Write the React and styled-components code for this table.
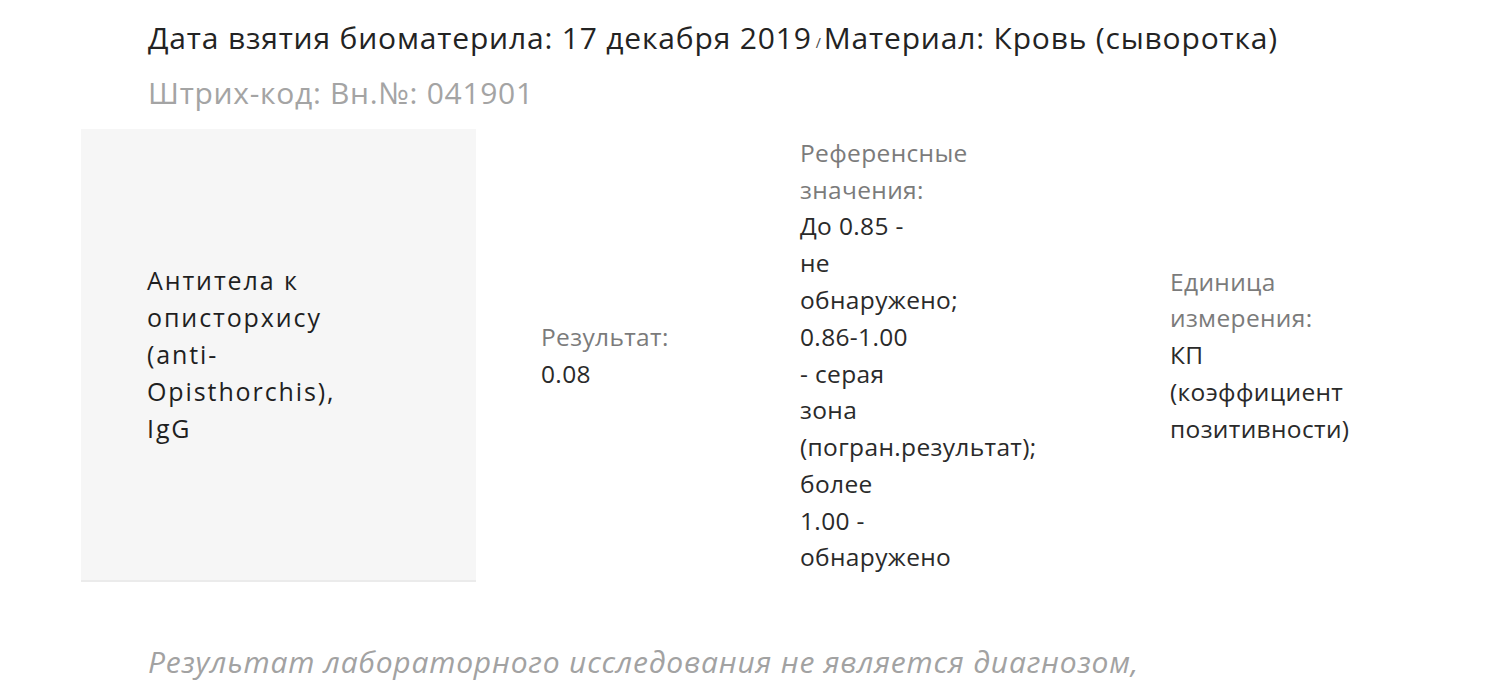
import React from "react";
import styled, { createGlobalStyle } from "styled-components";

const Global = createGlobalStyle`
  html, body { margin: 0; padding: 0; background: #ffffff; }
  body { font-family: "Open Sans", "Noto Sans", sans-serif; color: #222; overflow: hidden; }
`;

const Page = styled.div`
  width: 1500px;
  height: 693px;
  overflow: hidden;
  padding: 10px 81px 0;
  box-sizing: border-box;
`;

const Header = styled.div`
  padding-left: 67px;
`;

const HeaderLine = styled.div`
  font-size: 30px;
  line-height: 55px;
  height: 55px;
  letter-spacing: ${(p) => (p.$muted ? "0.7px" : "0.82px")};
  white-space: nowrap;
  color: ${(p) => (p.$muted ? "#a4a4a4" : "#232323")};
`;

const Sep = styled.span`
  font-size: 14px;
  line-height: 0;
  letter-spacing: 0;
  color: #444;
  margin: 0 3px 0 4px;
  vertical-align: 1px;
`;

const Row = styled.div`
  margin-top: 9px;
  display: flex;
  align-items: center;
  height: 453px;
`;

const NameCell = styled.div`
  flex: 0 0 395px;
  align-self: stretch;
  box-sizing: border-box;
  background: #f6f6f6;
  border-bottom: 2px solid #ebebeb;
  display: flex;
  align-items: center;
  padding-left: 66px;
`;

const NameText = styled.div`
  width: 215px;
  font-size: 25px;
  line-height: 37px;
  letter-spacing: 1.9px;
  color: #1f1f1f;
`;

const Column = styled.div`
  flex: 0 0 ${(p) => p.$w}px;
  box-sizing: border-box;
  padding-left: ${(p) => p.$pad || 0}px;
  font-size: 24.5px;
  line-height: 36.8px;
  letter-spacing: 0.35px;
`;

const ColText = styled.div`
  width: 116px;
  white-space: normal;
  color: ${(p) => (p.$label ? "#7b7b7b" : "#2a2a2a")};
`;

const Footer = styled.div`
  margin-top: 54px;
  padding-left: 67px;
  font-size: 30px;
  line-height: 52px;
  letter-spacing: 0.8px;
  font-style: italic;
  color: #a2a2a2;
  white-space: nowrap;
`;

export default function App() {
  return (
    <>
      <Global />
      <Page>
        <Header>
          <HeaderLine>
            Дата взятия биоматерила: 17 декабря 2019<Sep>/</Sep>Материал: Кровь (сыворотка)
          </HeaderLine>
          <HeaderLine $muted>Штрих-код: Вн.№: 041901</HeaderLine>
        </Header>
        <Row>
          <NameCell>
            <NameText>Антитела к описторхису (anti-Opisthorchis), IgG</NameText>
          </NameCell>
          <Column $w={324} $pad={65}>
            <ColText $label>Результат:</ColText>
            <ColText>0.08</ColText>
          </Column>
          <Column $w={370}>
            <ColText $label>Референсные значения:</ColText>
            <ColText>
              До 0.85 - не обнаружено; 0.86-1.00 - серая зона (погран.результат); более 1.00 - обнаружено
            </ColText>
          </Column>
          <Column $w={250}>
            <ColText $label>Единица измерения:</ColText>
            <ColText>КП (коэффициент позитивности)</ColText>
          </Column>
        </Row>
        <Footer>Результат лабораторного исследования не является диагнозом,</Footer>
      </Page>
    </>
  );
}
